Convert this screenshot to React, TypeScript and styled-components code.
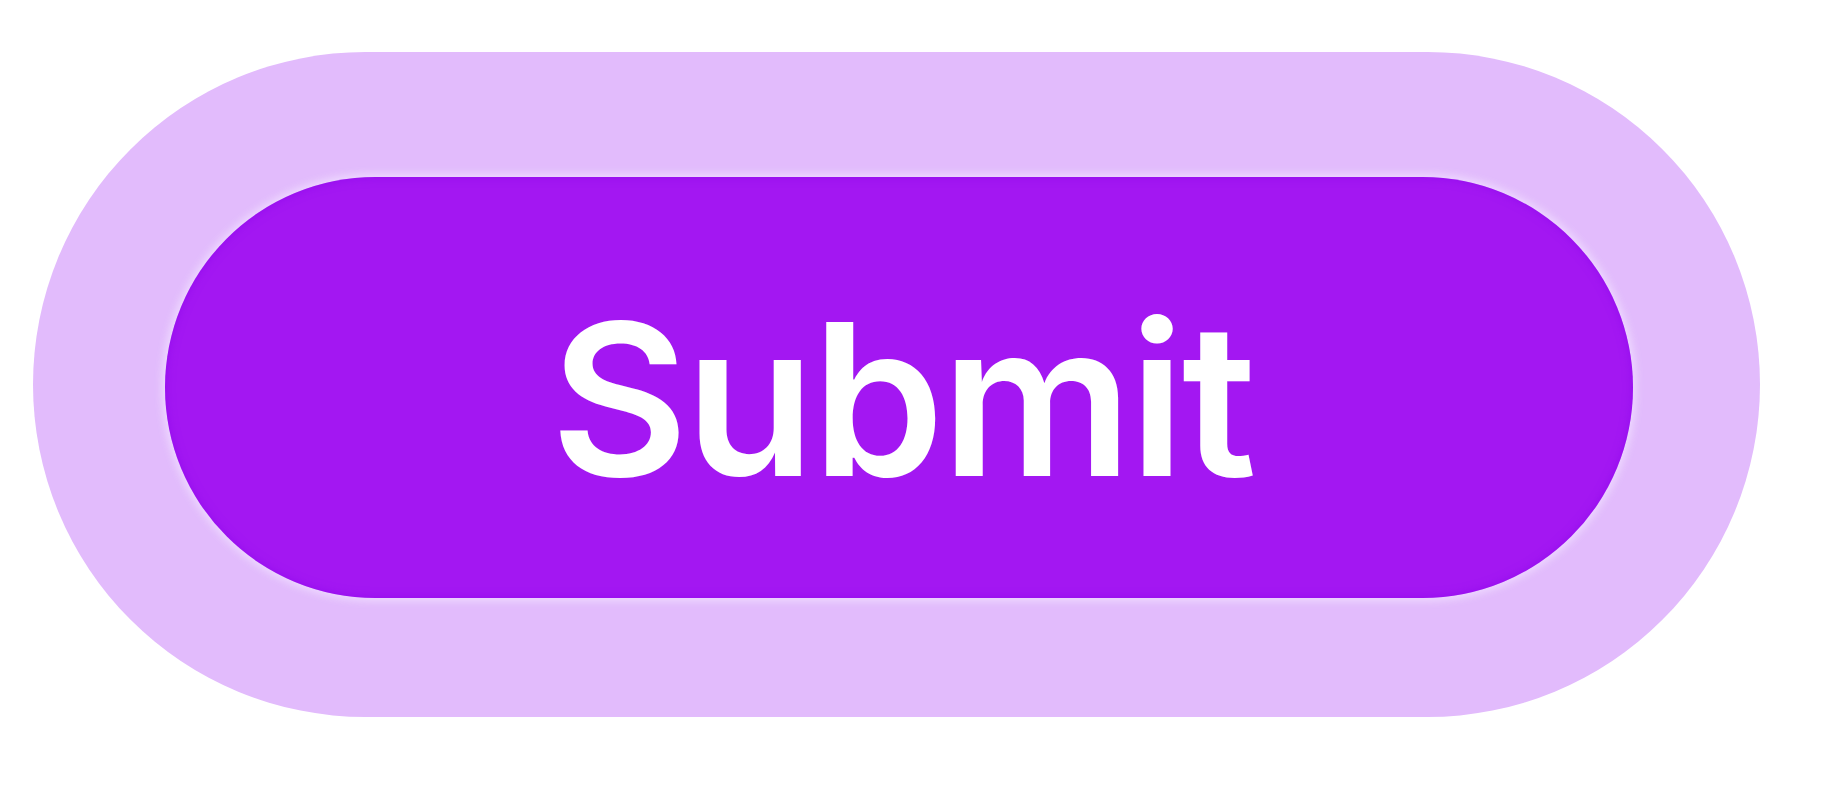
import React from 'react';
import styled, { createGlobalStyle } from 'styled-components';

const GlobalStyle = createGlobalStyle`
  html, body {
    margin: 0;
    padding: 0;
    background: #ffffff;
  }
  body {
    font-family: Inter, "Noto Sans", "Liberation Sans", sans-serif;
  }
`;

const Page = styled.div`
  width: 1824px;
  height: 790px;
  box-sizing: border-box;
  padding: 52px 0 0 33px;
  overflow: hidden;
`;

// the light focus ring around the button
const FocusRing = styled.div`
  display: inline-flex;
  padding: 125px 127px 119px 132px;
  border-radius: 9999px;
  background-color: #e2bbfc;
`;

const SubmitButton = styled.button`
  display: flex;
  align-items: center;
  justify-content: center;
  width: 1468px;
  height: 421px;
  padding: 22px 0 0 6px;
  box-sizing: border-box;
  border: none;
  border-radius: 9999px;
  background-color: #a317f2;
  color: #ffffff;
  font-family: Inter, "Noto Sans", "Liberation Sans", sans-serif;
  font-size: 212px;
  font-weight: 600;
  line-height: 1;
  cursor: pointer;
  box-shadow:
    inset 0 0 10px rgba(135, 0, 235, 0.55),
    0 0 8px 3px rgba(240, 222, 255, 0.9);
`;

const Label = styled.span`
  display: block;
  letter-spacing: -3px;
`;

export default function App() {
  return (
    <>
      <GlobalStyle />
      <Page>
        <FocusRing>
          <SubmitButton type="submit">
            <Label>Submit</Label>
          </SubmitButton>
        </FocusRing>
      </Page>
    </>
  );
}
